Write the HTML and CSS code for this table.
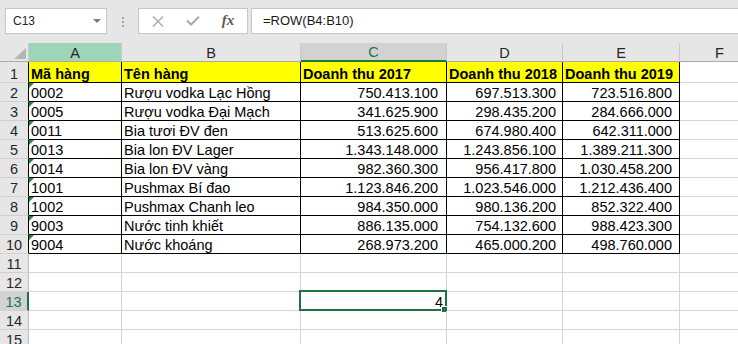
FILE: index.html
```html
<!DOCTYPE html>
<html lang="vi">
<head>
    <meta charset="UTF-8">
    <meta name="viewport" content="width=device-width, initial-scale=1.0">
    <title>Doanh thu</title>
    <link rel="stylesheet" href="styles.css">
</head>
<body>
    <!-- Thanh công thức -->
    <div class="formula-bar">
        <div class="name-box">C13 <span class="caret"></span></div>
        <div class="grip"><span></span><span></span><span></span></div>
        <div class="fx-buttons">
            <span class="fx-btn">
                <svg width="12" height="11" viewBox="0 0 12 11"><path d="M1 0.5L11 10.5M11 0.5L1 10.5" stroke="#a9a9a9" stroke-width="1.4" fill="none"/></svg>
            </span>
            <span class="fx-btn">
                <svg width="14" height="10" viewBox="0 0 14 10"><path d="M1 4.5L5 8.5L13 0.8" stroke="#a9a9a9" stroke-width="2" fill="none"/></svg>
            </span>
            <span class="fx-btn fx">fx</span>
        </div>
        <div class="formula">=ROW(B4:B10)</div>
    </div>

    <!-- Bảng tính -->
    <div class="sheet">
        <div class="corner"></div>
        <div class="colhead col-a">A</div>
        <div class="colhead">B</div>
        <div class="colhead active">C</div>
        <div class="colhead">D</div>
        <div class="colhead">E</div>
        <div class="colhead">F</div>

        <div class="rowhead in">1</div>
        <div class="cell b hd">Mã hàng</div>
        <div class="cell b hd">Tên hàng</div>
        <div class="cell b hd">Doanh thu 2017</div>
        <div class="cell b hd">Doanh thu 2018</div>
        <div class="cell b hd">Doanh thu 2019</div>
        <div class="cell"></div>

        <div class="rowhead in">2</div>
        <div class="cell b txt">0002</div>
        <div class="cell b">Rượu vodka Lạc Hồng</div>
        <div class="cell b num c">750.413.100</div>
        <div class="cell b num d">697.513.300</div>
        <div class="cell b num e">723.516.800</div>
        <div class="cell"></div>

        <div class="rowhead in">3</div>
        <div class="cell b txt">0005</div>
        <div class="cell b">Rượu vodka Đại Mạch</div>
        <div class="cell b num c">341.625.900</div>
        <div class="cell b num d">298.435.200</div>
        <div class="cell b num e">284.666.000</div>
        <div class="cell"></div>

        <div class="rowhead in">4</div>
        <div class="cell b txt">0011</div>
        <div class="cell b">Bia tươi ĐV đen</div>
        <div class="cell b num c">513.625.600</div>
        <div class="cell b num d">674.980.400</div>
        <div class="cell b num e">642.311.000</div>
        <div class="cell"></div>

        <div class="rowhead in">5</div>
        <div class="cell b txt">0013</div>
        <div class="cell b">Bia lon ĐV Lager</div>
        <div class="cell b num c">1.343.148.000</div>
        <div class="cell b num d">1.243.856.100</div>
        <div class="cell b num e">1.389.211.300</div>
        <div class="cell"></div>

        <div class="rowhead in">6</div>
        <div class="cell b txt">0014</div>
        <div class="cell b">Bia lon ĐV vàng</div>
        <div class="cell b num c">982.360.300</div>
        <div class="cell b num d">956.417.800</div>
        <div class="cell b num e">1.030.458.200</div>
        <div class="cell"></div>

        <div class="rowhead in">7</div>
        <div class="cell b txt">1001</div>
        <div class="cell b">Pushmax Bí đao</div>
        <div class="cell b num c">1.123.846.200</div>
        <div class="cell b num d">1.023.546.000</div>
        <div class="cell b num e">1.212.436.400</div>
        <div class="cell"></div>

        <div class="rowhead in">8</div>
        <div class="cell b txt">1002</div>
        <div class="cell b">Pushmax Chanh leo</div>
        <div class="cell b num c">984.350.000</div>
        <div class="cell b num d">980.136.200</div>
        <div class="cell b num e">852.322.400</div>
        <div class="cell"></div>

        <div class="rowhead in">9</div>
        <div class="cell b txt">9003</div>
        <div class="cell b">Nước tinh khiết</div>
        <div class="cell b num c">886.135.000</div>
        <div class="cell b num d">754.132.600</div>
        <div class="cell b num e">988.423.300</div>
        <div class="cell"></div>

        <div class="rowhead in">10</div>
        <div class="cell b txt">9004</div>
        <div class="cell b">Nước khoáng</div>
        <div class="cell b num c">268.973.200</div>
        <div class="cell b num d">465.000.200</div>
        <div class="cell b num e">498.760.000</div>
        <div class="cell"></div>

        <div class="rowhead">11</div>
        <div class="cell"></div><div class="cell"></div><div class="cell"></div>
        <div class="cell"></div><div class="cell"></div><div class="cell"></div>

        <div class="rowhead">12</div>
        <div class="cell"></div><div class="cell"></div><div class="cell"></div>
        <div class="cell"></div><div class="cell"></div><div class="cell"></div>

        <div class="rowhead active">13</div>
        <div class="cell"></div>
        <div class="cell"></div>
        <div class="cell num selected">4<span class="sel-box"></span></div>
        <div class="cell"></div><div class="cell"></div><div class="cell"></div>

        <div class="rowhead">14</div>
        <div class="cell"></div><div class="cell"></div><div class="cell"></div>
        <div class="cell"></div><div class="cell"></div><div class="cell"></div>

        <div class="rowhead">15</div>
        <div class="cell"></div><div class="cell"></div><div class="cell"></div>
        <div class="cell"></div><div class="cell"></div><div class="cell"></div>
    </div>
</body>
</html>
```

FILE: styles.css
```css
body {
    margin: 0;
    width: 738px;
    height: 344px;
    overflow: hidden;
    background: #fff;
    font-family: "Liberation Sans", Arial, sans-serif;
    color: #000;
}

/* thanh công thức */
.formula-bar {
    display: flex;
    align-items: flex-start;
    height: 43px;
    box-sizing: border-box;
    padding: 8px 0 0 5px;
    background: #e6e6e6;
}

.name-box {
    width: 102px;
    height: 26px;
    box-sizing: border-box;
    border: 1px solid #c6c6c6;
    background: #fff;
    display: flex;
    align-items: center;
    justify-content: space-between;
    padding: 0 5px 1px 7px;
    font-size: 12px;
    color: #262626;
}

.caret {
    width: 0;
    height: 0;
    border-left: 4px solid transparent;
    border-right: 4px solid transparent;
    border-top: 4px solid #7a7a7a;
}

.grip {
    display: flex;
    flex-direction: column;
    gap: 2px;
    margin: 9px 0 0 15px;
}

.grip span {
    width: 2px;
    height: 2px;
    background: #a6a6a6;
}

.fx-buttons {
    display: flex;
    align-items: center;
    gap: 15px;
    width: 110px;
    height: 26px;
    box-sizing: border-box;
    margin-left: 14px;
    padding-left: 9px;
    border: 1px solid #c6c6c6;
    background: #fff;
}

.fx-btn {
    width: 20px;
    display: flex;
    justify-content: center;
}

.fx {
    font-family: "Liberation Serif", serif;
    font-style: italic;
    font-weight: bold;
    font-size: 15px;
    color: #5a5a5a;
    padding-bottom: 1px;
}

.formula {
    flex: 1;
    height: 26px;
    box-sizing: border-box;
    margin: 0 -2px 0 3px;
    padding: 4px 0 0 11px;
    border: 1px solid #c6c6c6;
    background: #fff;
    font-size: 13px;
    color: #1a1a1a;
}

/* lưới bảng tính */
.sheet {
    display: grid;
    grid-template-columns: 29px 93px 179px 146px 116px 117px 80px;
    grid-template-rows: 19px 21px repeat(14, 19px);
    font-size: 14.5px;
    line-height: 15px;
}

.sheet > div {
    box-sizing: border-box;
    display: flex;
    align-items: flex-end;
    white-space: nowrap;
    overflow: hidden;
}

.corner {
    background: #e6e6e6;
    border-right: 1px solid #c9c9c9;
    border-bottom: 1px solid #ababab;
    justify-content: flex-end;
    padding: 0 2px 2px 0;
}

.corner::after {
    content: "";
    width: 0;
    height: 0;
    border-left: 12px solid transparent;
    border-bottom: 11px solid #b5b5b5;
}

.colhead {
    background: #e6e6e6;
    border-right: 1px solid #c9c9c9;
    border-bottom: 1px solid #ababab;
    justify-content: center;
    color: #262626;
}

.colhead.col-a {
    background: #9fd5b7;
}

.colhead.active {
    background: #d2d2d2;
    color: #217346;
    border-bottom: 2px solid #217346;
}

.rowhead {
    background: #e6e6e6;
    border-right: 1px solid #bdbdbd;
    border-bottom: 1px solid #d0d0d0;
    justify-content: center;
    color: #262626;
}

.rowhead.in {
    border-right-color: #000;
}

.rowhead.active {
    background: #d2d2d2;
    color: #217346;
    border-right: 2px solid #217346;
}

.cell {
    border-right: 1px solid #d4d4d4;
    border-bottom: 1px solid #d4d4d4;
    padding: 0 2px;
    position: relative;
}

.cell.b {
    border-right-color: #000;
    border-bottom-color: #000;
}

.cell.hd {
    background: #ffff00;
    font-weight: bold;
}

.cell.num {
    justify-content: flex-end;
}

.num.c { padding-right: 8px; }
.num.d { padding-right: 6px; }
.num.e { padding-right: 7px; }

/* số lưu dạng văn bản */
.cell.txt::before {
    content: "";
    position: absolute;
    top: 0;
    left: 0;
    border-top: 5px solid #1e8a3c;
    border-right: 5px solid transparent;
}

.cell.selected {
    overflow: visible;
    padding-right: 3px;
}

.sel-box {
    position: absolute;
    left: -2px;
    top: -2px;
    right: -1px;
    bottom: -1px;
    border: 2px solid #217346;
}

.sel-box::after {
    content: "";
    position: absolute;
    right: -3px;
    bottom: -4px;
    width: 5px;
    height: 5px;
    background: #217346;
    border: 1px solid #fff;
}
```
